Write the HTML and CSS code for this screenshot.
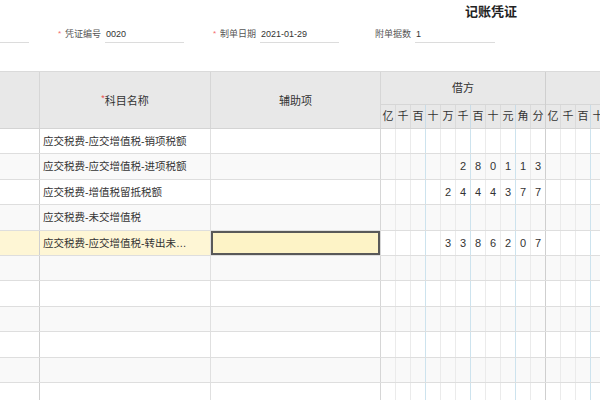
FILE: index.html
```html
<!DOCTYPE html>
<html lang="zh-CN">
<head>
    <meta charset="UTF-8">
    <meta name="viewport" content="width=device-width, initial-scale=1.0">
    <title>记账凭证</title>
    <link rel="stylesheet" href="styles.css">
</head>
<body>

<div class="voucher">
    <div class="title">记账凭证</div>

    <!-- Voucher info -->
    <div class="form-row">
        <div class="field"><span class="input cut"></span></div>
        <div class="field">
            <span class="req">*</span><span class="label">凭证编号</span>
            <span class="input">0020</span>
        </div>
        <div class="field">
            <span class="req">*</span><span class="label">制单日期</span>
            <span class="input">2021-01-29</span>
        </div>
        <div class="field">
            <span class="req hidden">*</span><span class="label">附单据数</span>
            <span class="input wide">1</span>
        </div>
    </div>

    <!-- Entries -->
    <div class="grid">
        <div class="head">
            <div class="cell c-idx"></div>
            <div class="cell c-subj"><span class="req-head">*</span>科目名称</div>
            <div class="cell c-aux">辅助项</div>
            <div class="group">
                <div class="group-title">借方</div>
                <div class="digits" id="debit-units"></div>
            </div>
            <div class="group narrow">
                <div class="group-title"></div>
                <div class="digits" id="credit-units"></div>
            </div>
        </div>
        <div id="rows"></div>
    </div>
</div>

<script>
    const units = ['亿', '千', '百', '十', '万', '千', '百', '十', '元', '角', '分'];

    const entries = [
        { subject: '应交税费-应交增值税-销项税额', debit: '' },
        { subject: '应交税费-应交增值税-进项税额', debit: '280113' },
        { subject: '应交税费-增值税留抵税额', debit: '2444377' },
        { subject: '应交税费-未交增值税', debit: '' },
        { subject: '应交税费-应交增值税-转出未交增值税', debit: '3386207', active: true },
        { subject: '', debit: '' },
        { subject: '', debit: '' },
        { subject: '', debit: '' },
        { subject: '', debit: '' },
        { subject: '', debit: '' },
        { subject: '', debit: '' }
    ];

    // class for a digit column: blue line after 百 / 千 / 元
    function digitClass(i) {
        let cls = 'd';
        if (i === 2 || i === 5 || i === 8) cls += ' sep';
        if (i === 10) cls += ' last';
        return cls;
    }

    function digitCells(chars) {
        return chars.map((ch, i) => `<span class="${digitClass(i)}">${ch}</span>`).join('');
    }

    function amountCells(text) {
        return digitCells(text.padStart(11, ' ').split('').map(ch => ch.trim()));
    }

    function renderHead() {
        document.getElementById('debit-units').innerHTML = digitCells(units);
        document.getElementById('credit-units').innerHTML = digitCells(units.slice(0, 4));
    }

    function renderRows() {
        const rowsDiv = document.getElementById('rows');
        rowsDiv.innerHTML = '';
        entries.forEach(entry => {
            rowsDiv.innerHTML += `
                <div class="row${entry.active ? ' active' : ''}">
                    <div class="cell c-idx"></div>
                    <div class="cell c-subj"><span class="text">${entry.subject}</span></div>
                    <div class="cell c-aux"></div>
                    <div class="group"><div class="digits">${amountCells(entry.debit)}</div></div>
                    <div class="group"><div class="digits">${amountCells('')}</div></div>
                </div>`;
        });
    }

    renderHead();
    renderRows();
</script>

</body>
</html>
```

FILE: styles.css
```css
* {
    box-sizing: border-box;
}
body {
    margin: 0;
    font-family: "Liberation Sans", "Noto Sans CJK SC", sans-serif;
    color: #333;
    background-color: #fff;
    overflow: hidden;
}
.voucher {
    width: 720px;
}
.title {
    height: 22px;
    padding: 4px 0 0 465px;
    font-size: 13px;
    line-height: 16px;
    font-weight: bold;
    color: #222;
}

/* info fields */
.form-row {
    display: flex;
    height: 49px;
    padding-top: 4px;
}
.field {
    display: flex;
    height: 17px;
    align-items: flex-start;
}
.field + .field {
    margin-left: 29px;
}
.req {
    width: 7px;
    font-size: 8px;
    line-height: 15px;
    color: #f56c6c;
}
.req.hidden {
    visibility: hidden;
}
.label {
    width: 40px;
    font-size: 9px;
    line-height: 16px;
    color: #555;
}
.input {
    width: 79px;
    height: 17px;
    padding-left: 1px;
    font-size: 9px;
    line-height: 16px;
    color: #333;
    border-bottom: 1px solid #dcdcdc;
}
.input.cut {
    width: 29px;
}
.input.wide {
    width: 80px;
}

/* entries grid */
.grid {
    font-size: 11px;
}
.head {
    display: flex;
    height: 58px;
    background-color: #e8e8e8;
    border-top: 1px solid #dadada;
    border-bottom: 1px solid #d4d4d4;
}
.cell {
    flex: none;
    border-right: 1px solid #e0e0e0;
}
.c-idx {
    width: 40px;
    border-right-color: #d0d0d0;
}
.c-subj {
    width: 171px;
}
.c-aux {
    width: 170px;
    border-right-color: #d6d6d6;
}
.head .cell {
    display: flex;
    align-items: center;
    justify-content: center;
    border-right-color: #d6d6d6;
}
.req-head {
    color: #e84c4c;
    font-size: 9px;
    align-self: center;
    margin-top: -4px;
}
.group {
    flex: none;
    width: 165px;
    display: flex;
    flex-direction: column;
    border-right: 1px solid #cfcfcf;
}
.group.narrow {
    width: 60px;
    border-right: none;
}
.group-title {
    height: 33px;
    line-height: 32px;
    text-align: center;
    border-bottom: 1px solid #d6d6d6;
}
.digits {
    display: flex;
    flex: 1;
}
.d {
    width: 15px;
    flex: none;
    text-align: center;
    border-right: 1px solid #ebebeb;
}
.d.sep {
    border-right-color: #cde3ee;
}
.d.last {
    width: 14px;
    border-right: none;
}
.head .digits {
    align-items: center;
}
.head .d {
    height: 100%;
    line-height: 22px;
    border-right-color: #dadada;
}
.head .d.sep {
    border-right-color: #c8dce8;
}

/* body rows */
.row {
    display: flex;
    height: 25.4px;
    border-bottom: 1px solid #dedede;
}
.row:nth-child(even) {
    background-color: #f9f9f9;
}
.row .d {
    line-height: 24px;
}
.c-subj .text {
    display: block;
    padding: 0 14px 0 3px;
    font-size: 10.5px;
    line-height: 24px;
    white-space: nowrap;
    overflow: hidden;
    text-overflow: ellipsis;
}
.row.active {
    background-color: #fef6d5;
}
.row.active .group {
    background-color: #fff;
}
.row.active .c-aux {
    background-color: #fdf3c6;
    box-shadow: inset 0 0 0 2px #595959;
}
```
